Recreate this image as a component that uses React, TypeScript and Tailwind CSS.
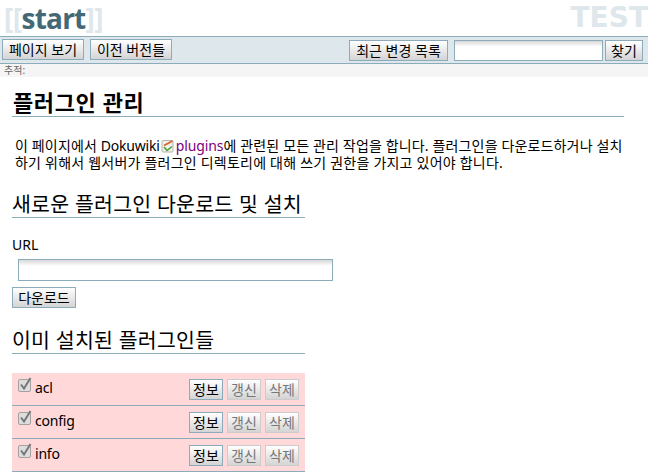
const FONT = "font-['Noto_Sans','Noto_Sans_CJK_KR',sans-serif]";
const BTN =
  "h-[21px] border border-[#8cacbb] bg-gradient-to-b from-white to-[#d4d4d4] text-[14px] leading-none text-black flex items-center justify-center whitespace-nowrap";

const Btn = ({ label, className = "" }: { label: string; className?: string }) => (
  <button className={`${BTN} ${className}`}>{label}</button>
);

const PluginRow = ({ name }: { name: string }) => (
  <div className="h-[33px] border-b border-[#8cacbb] flex items-start pl-[6px] pr-[6px]">
    <svg width="14" height="15" viewBox="0 0 14 15" className="mt-[4px]">
      <rect x="0.5" y="2.5" width="12" height="12" rx="1.5" fill="#ddd" stroke="#a8a0a0" />
      <path d="M3 7.5 L6 11.5 L12.5 1" fill="none" stroke="#777" strokeWidth="2" />
    </svg>
    <span className="ml-[3px] mt-[6px] text-[14px] leading-[18px] tracking-[-0.2px] text-black">{name}</span>
    <div className="ml-auto mt-[6px] flex gap-[4px]">
      <Btn label="정보" className="w-[34px] h-[20px]" />
      <Btn label="갱신" className="w-[34px] h-[20px] border-[#ccc] !text-[#777] from-[#eee] to-[#ccc]" />
      <Btn label="삭제" className="w-[34px] h-[20px] border-[#ccc] !text-[#777] from-[#eee] to-[#ccc]" />
    </div>
  </div>
);

const App = () => {
  return (
    <div className={`${FONT} w-[648px] h-[474px] overflow-hidden bg-white text-black`}>
      <header className="h-[36px] flex justify-between items-start pl-[4px] font-bold text-[28px] leading-[36px] overflow-hidden">
        <div className="font-['Open_Sans',sans-serif] text-[#436976] whitespace-nowrap">
          <span className="text-[#dee7ec] tracking-[-0.5px]">[[</span>
          <span className="tracking-[-0.8px]">start</span>
          <span className="text-[#dee7ec] tracking-[-0.5px]">]]</span>
        </div>
        <div className="font-['DejaVu_Sans',sans-serif] text-[#dee7ec] whitespace-nowrap">TEST</div>
      </header>

      <nav className="h-[28px] bg-[#dee7ec] border-y border-[#8cacbb] flex items-center pl-[2px] pr-[5px]">
        <Btn label="페이지 보기" className="w-[82px] -mt-[1px]" />
        <Btn label="이전 버전들" className="w-[82px] ml-[6px] -mt-[1px]" />
        <Btn label="최근 변경 목록" className="w-[99px] ml-auto mt-[1px]" />
        <input className="w-[149px] h-[21px] ml-[6px] mt-[1px] border border-[#8cacbb] bg-gradient-to-b from-[#d8d8d8] to-white to-30%" />
        <Btn label="찾기" className="w-[38px] ml-[2px] mt-[1px]" />
      </nav>

      <div className="h-[13px] bg-[#f5f5f5] pl-[4px] text-[10px] leading-[13px] text-[#666]">추적:</div>

      <main className="pl-[12px] pr-[24px]">
        <h1 className="mt-[12px] h-[28px] border-b border-[#8cacbb] text-[22px] leading-[27px] font-bold tracking-[0.6px] pl-[1px] whitespace-nowrap">
          플러그인 관리
        </h1>
        <p className="mt-[20px] pl-[3px] text-[14px] leading-[17px] tracking-[0.15px] whitespace-nowrap">
          이 페이지에서 <span className="tracking-[-0.2px]">Dokuwiki</span>
          <svg width="14" height="14" viewBox="0 0 14 14" className="inline-block mx-[1px] align-[-2px]">
            <rect x="1" y="1.5" width="11" height="11.5" rx="1" fill="#f1f1ea" stroke="#b5b5a8" />
            <path d="M3 6.5 L11.5 2" stroke="#d9602c" strokeWidth="1.6" fill="none" />
            <path d="M3 8 L6 11.5 L11 7.5" stroke="#4f9e3a" strokeWidth="1.6" fill="none" />
          </svg>
          <span className="text-[#800080] tracking-[-0.1px]">plugins</span>에 관련된 모든 관리 작업을 합니다. 플러그인을 다운로드하거나 설치
          <br />
          <span className="tracking-[0.22px]">하기 위해서 웹서버가 플러그인 디렉토리에 대해 쓰기 권한을 가지고 있어야 합니다.</span>
        </p>

        <h2 className="mt-[17px] w-[293px] h-[30px] border-b border-[#8cacbb] text-[20.5px] leading-[32px] tracking-[0.25px] whitespace-nowrap">
          새로운 플러그인 다운로드 및 설치
        </h2>

        <div className="mt-[18px] text-[14px] leading-[18px]">URL</div>
        <input className="block ml-[6px] mt-[5px] w-[315px] h-[22px] border border-[#8cacbb] bg-gradient-to-b from-[#d8d8d8] to-white to-30%" />
        <Btn label="다운로드" className="w-[64px] mt-[6px]" />

        <h2 className="mt-[16px] w-[293px] h-[30px] border-b border-[#8cacbb] text-[20.5px] leading-[32px] tracking-[0.25px] whitespace-nowrap">
          이미 설치된 플러그인들
        </h2>

        <div className="mt-[19px] w-[293px] bg-[#ffd9d9]">
          <PluginRow name="acl" />
          <PluginRow name="config" />
          <PluginRow name="info" />
        </div>
      </main>
    </div>
  );
};

export default App;
